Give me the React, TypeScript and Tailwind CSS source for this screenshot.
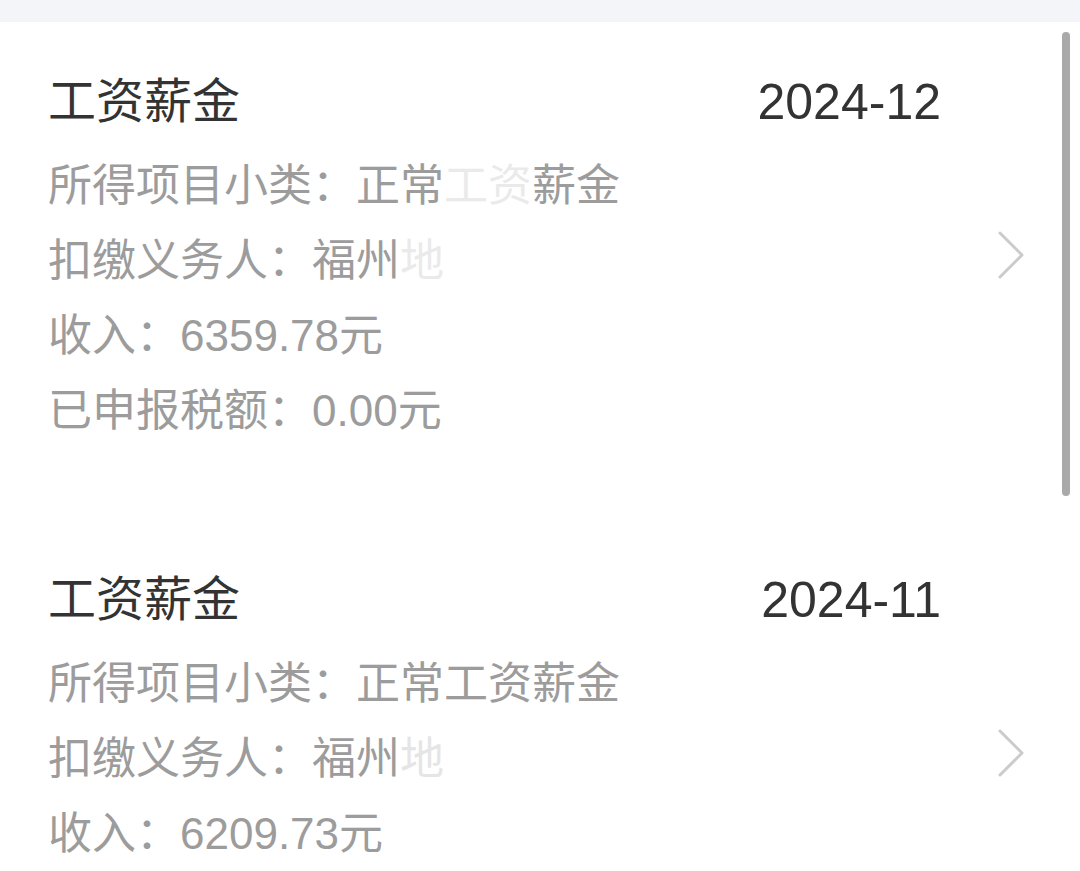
import React from 'react';

interface Record {
  month: string;
  subType: React.ReactNode;
  payer: React.ReactNode;
  income: string;
  tax: string;
}

const records: Record[] = [
  {
    month: '2024-12',
    subType: (
      <>
        正常<span className="opacity-20">工资</span>薪金
      </>
    ),
    payer: (
      <>
        福州<span className="opacity-20">地</span>
      </>
    ),
    income: '6359.78',
    tax: '0.00',
  },
  {
    month: '2024-11',
    subType: '正常工资薪金',
    payer: (
      <>
        福州<span className="opacity-25">地</span>
      </>
    ),
    income: '6209.73',
    tax: '0.00',
  },
];

const Chevron = () => (
  <svg viewBox="0 0 26 48" className="w-[26px] h-[48px]" fill="none">
    <polyline points="2,2 24,24 2,46" stroke="#cbcbcb" strokeWidth="3" strokeLinecap="round" strokeLinejoin="round" />
  </svg>
);

const RecordCard = ({ r }: { r: Record }) => (
  <div className="flex items-center pl-12 pr-[56px] pt-[50px] pb-[72px]">
    <div className="flex-1 min-w-0">
      {/* Title row */}
      <div className="flex justify-between items-center h-[60px]">
        <span className="text-[48px] text-[#333333]">工资薪金</span>
        <span className="text-[50px] text-[#333333]">{r.month}</span>
      </div>
      {/* Details */}
      <div className="mt-[16px] text-[44px] leading-[75px] text-[#9c9c9c]">
        <div className="whitespace-nowrap">所得项目小类：{r.subType}</div>
        <div className="whitespace-nowrap">扣缴义务人：{r.payer}</div>
        <div className="whitespace-nowrap">收入：{r.income}元</div>
        <div className="whitespace-nowrap">已申报税额：{r.tax}元</div>
      </div>
    </div>
    <div className="ml-[57px] mb-[11px] flex-shrink-0">
      <Chevron />
    </div>
  </div>
);

export default function App() {
  return (
    <div
      className="relative w-[1080px] h-[871px] overflow-hidden bg-white"
      style={{ fontFamily: '"Liberation Sans", "Noto Sans CJK SC", sans-serif' }}
    >
      <div className="h-[22px] bg-[#f4f5f8]" />
      {records.map((r) => (
        <RecordCard key={r.month} r={r} />
      ))}
      {/* overlay scroll indicator */}
      <div className="absolute left-[1062px] top-[32px] w-[8px] h-[464px] rounded-full bg-[#a9a9a9]" />
    </div>
  );
}
